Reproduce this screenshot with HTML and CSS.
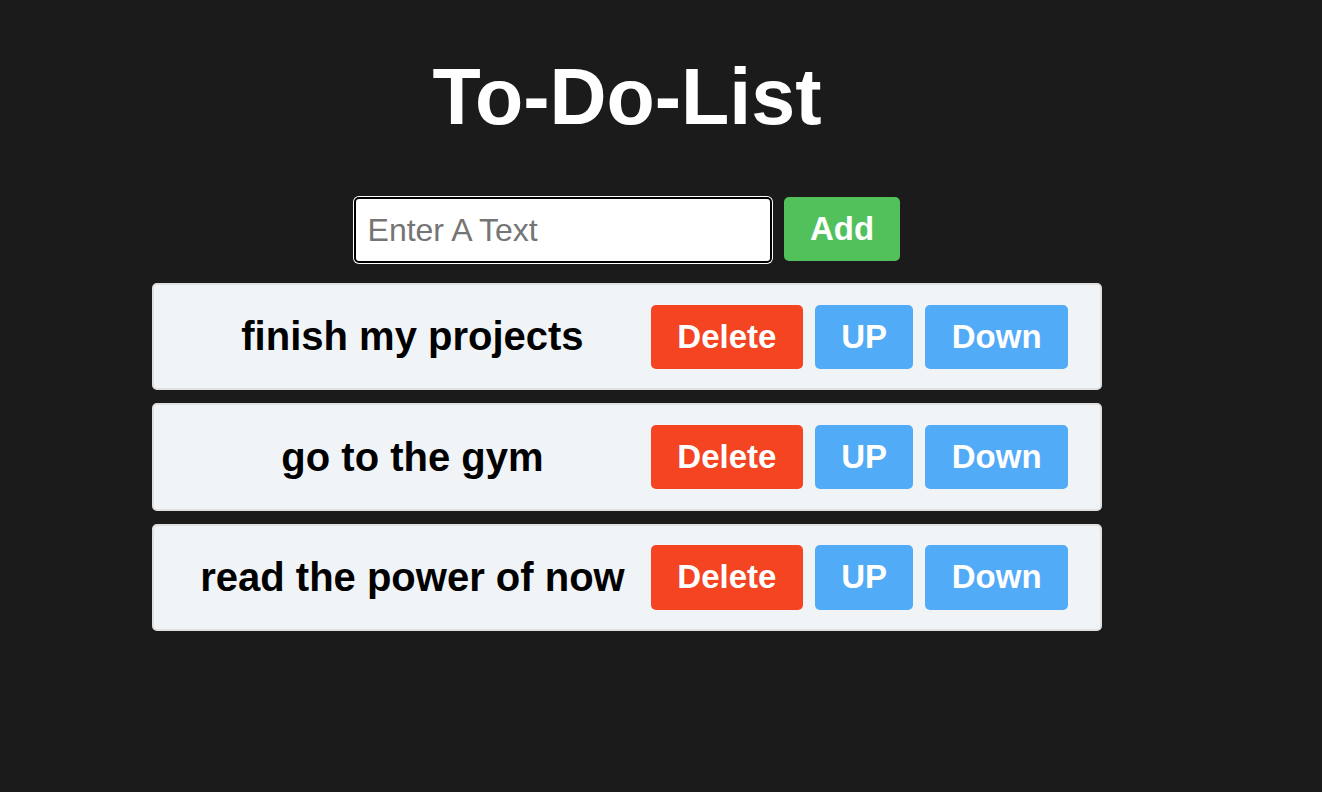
FILE: index.html
```html
<!DOCTYPE html>
<html lang="en">
<head>
<meta charset="utf-8">
<title>To-Do-List</title>
<link rel="stylesheet" href="styles.css">
</head>
<body>
<div class="app">
  <h1 class="title">To-Do-List</h1>
  <div class="form">
    <input class="field" type="text" placeholder="Enter A Text">
    <button class="btn btn-add">Add</button>
  </div>
  <ul class="list">
    <li class="item">
      <span class="item-text">finish my projects</span>
      <button class="btn btn-delete">Delete</button>
      <button class="btn btn-move">UP</button>
      <button class="btn btn-move">Down</button>
    </li>
    <li class="item">
      <span class="item-text">go to the gym</span>
      <button class="btn btn-delete">Delete</button>
      <button class="btn btn-move">UP</button>
      <button class="btn btn-move">Down</button>
    </li>
    <li class="item">
      <span class="item-text">read the power of now</span>
      <button class="btn btn-delete">Delete</button>
      <button class="btn btn-move">UP</button>
      <button class="btn btn-move">Down</button>
    </li>
  </ul>
</div>
</body>
</html>
```
FILE: styles.css
```css
html, body {
  margin: 0;
  padding: 0;
  background: #1b1b1b;
}
body {
  font-family: "Liberation Sans", Arial, sans-serif;
}
.app {
  width: 1254px;
  display: flex;
  flex-direction: column;
  align-items: center;
}
.title {
  margin: 51px 0 0;
  font-size: 79px;
  font-weight: 700;
  line-height: normal;
  color: #ffffff;
}
.form {
  margin-top: 54px;
  display: flex;
  align-items: flex-start;
  gap: 12px;
}
.field {
  box-sizing: border-box;
  width: 418px;
  height: 66px;
  margin: 0;
  padding: 0 12px;
  border: 2px solid #000;
  border-radius: 5px;
  box-shadow: 0 0 0 1px #fff;
  outline: none;
  background: #fff;
  font-family: "Liberation Sans", Arial, sans-serif;
  font-size: 32px;
  color: #000;
}
.field::placeholder {
  color: #757575;
}
.btn {
  margin: 0;
  border: none;
  border-radius: 5px;
  padding: 0.4em 0.8em;
  font-family: "Liberation Sans", Arial, sans-serif;
  font-size: 33px;
  font-weight: 700;
  line-height: normal;
  color: #fff;
  cursor: pointer;
}
.btn-add {
  background: #52c15c;
}
.btn-delete {
  background: #f44422;
}
.btn-move {
  background: #52abf6;
}
.list {
  list-style: none;
  margin: 20px 0 0;
  padding: 0;
  display: flex;
  flex-direction: column;
  gap: 13px;
}
.item {
  box-sizing: border-box;
  width: 950px;
  display: flex;
  align-items: center;
  gap: 12px;
  padding: 19.5px 32px 19.5px 20px;
  background: #f1f4f7;
  border: 2px solid #e0e0e0;
  border-radius: 5px;
}
.item-text {
  flex: 1;
  margin-right: -12px;
  text-align: center;
  font-size: 40px;
  font-weight: 700;
  color: #000;
}
```
